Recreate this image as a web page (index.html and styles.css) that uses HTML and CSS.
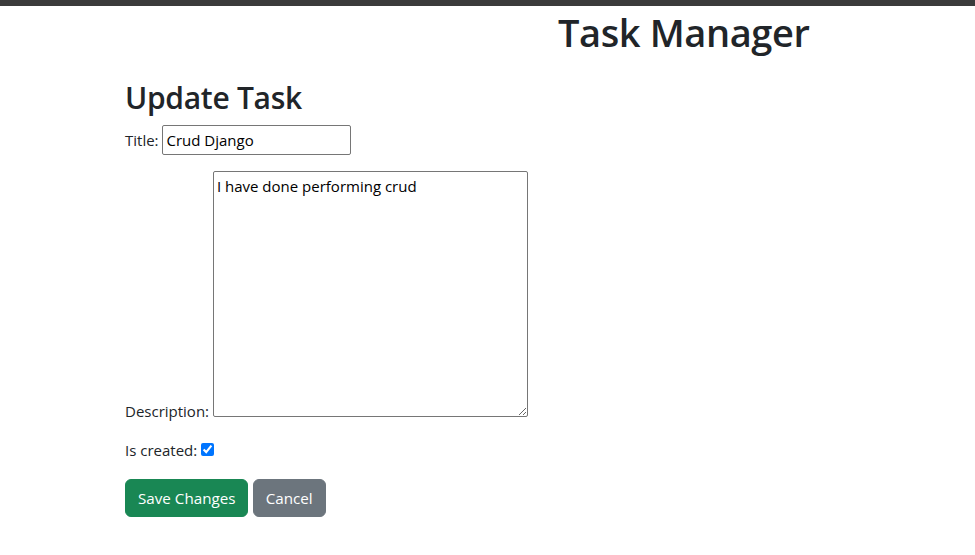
FILE: index.html
```html
<!DOCTYPE html>
<html lang="en">
<head>
<meta charset="utf-8">
<title>Task Manager</title>
<link rel="stylesheet" href="styles.css">
</head>
<body>
<div class="topbar"></div>
<header class="header">
  <h1 class="app-title">Task Manager</h1>
</header>
<main class="content">
  <h2 class="page-title">Update Task</h2>
  <form class="task-form">
    <p class="field"><label for="id_title">Title:</label> <input type="text" id="id_title" class="title-input" value="Crud Django"></p>
    <p class="field field-desc"><label for="id_description">Description:</label> <textarea id="id_description" class="desc-input">I have done performing crud</textarea></p>
    <p class="field field-check"><label for="id_created">Is created:</label><input type="checkbox" id="id_created" class="check" checked></p>
    <div class="actions"><button type="submit" class="btn btn-success">Save Changes</button> <a href="#" class="btn btn-secondary">Cancel</a></div>
  </form>
</main>
</body>
</html>
```
FILE: styles.css
```css
*, *::before, *::after { box-sizing: border-box; }
body {
  margin: 0;
  font-family: "Open Sans", "Noto Sans", sans-serif;
  font-size: 16px;
  line-height: 1.5;
  color: #212529;
  background: #fff;
}
.topbar {
  height: 6px;
  background: #3b3b3b;
}
.header {
  display: flex;
  justify-content: flex-start;
  padding-left: 558px;
}
.app-title {
  margin: 4px 0 0;
  font-size: 38px;
  font-weight: 600;
  line-height: 1.2;
  letter-spacing: -0.4px;
}
.content {
  padding-left: 125px;
  padding-top: 24px;
}
.page-title {
  margin: 0 0 9px;
  font-size: 30px;
  font-weight: 600;
  line-height: 1.2;
  letter-spacing: -0.3px;
}
.task-form { margin: 0; }
.field { margin: 0 0 16px; font-size: 15px; }
.field-desc { margin-bottom: 17px; }
.field-check { margin-bottom: 17px; }
.title-input, .desc-input {
  font: inherit;
  font-size: 15px;
  line-height: 24px;
  color: #000;
  border: 1px solid #767676;
  border-radius: 2px;
  padding: 2px 3px;
  margin: 0;
}
.title-input { width: 189px; height: 30px; }
.desc-input {
  width: 315px;
  height: 246px;
  resize: vertical;
  vertical-align: baseline;
}
.check {
  width: 13px;
  height: 13px;
  margin: 4px 3px 3px 4px;
  accent-color: #0075ff;
}
.actions { margin-top: 0; }
.btn {
  display: inline-block;
  font: inherit;
  font-size: 15.2px;
  line-height: 24px;
  padding: 6px 12px;
  border: 1px solid transparent;
  border-radius: 6px;
  color: #fff;
  text-decoration: none;
  cursor: pointer;
}
.btn-success { background: #198754; border-color: #198754; }
.btn-secondary { background: #6c757d; border-color: #6c757d; }
```
